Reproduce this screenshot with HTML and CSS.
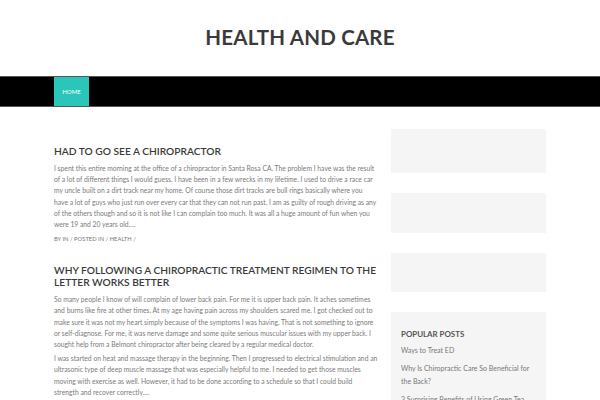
FILE: index.html
```html
<!DOCTYPE html>
<html>
<head>
<meta charset="utf-8">
<link rel="stylesheet" href="styles.css">
</head>
<body>
<header class="site-header">
  <h1 class="site-title">HEALTH AND CARE</h1>
</header>
<nav class="main-nav">
  <div class="nav-inner">
    <a class="nav-item active">HOME</a>
  </div>
</nav>
<div class="container">
  <main class="content">
    <article class="post">
      <h2 class="post-title">HAD TO GO SEE A CHIROPRACTOR</h2>
      <p class="post-text">I spent this entire morning at the office of a chiropractor in Santa Rosa CA. The problem I have was the result of a lot of different things I would guess. I have been in a few wrecks in my lifetime. I used to drive a race car my uncle built on a dirt track near my home. Of course those dirt tracks are bull rings basically where you have a lot of guys who just run over every car that they can not run past. I am as guilty of rough driving as any of the others though and so it is not like I can complain too much. It was all a huge amount of fun when you were 19 and 20 years old.…</p>
      <div class="post-meta">BY IN / POSTED IN / HEALTH /</div>
    </article>
    <article class="post">
      <h2 class="post-title">WHY FOLLOWING A CHIROPRACTIC TREATMENT REGIMEN TO THE LETTER WORKS BETTER</h2>
      <p class="post-text">So many people I know of will complain of lower back pain. For me it is upper back pain. It aches sometimes and burns like fire at other times. At my age having pain across my shoulders scared me. I got checked out to make sure it was not my heart simply because of the symptoms I was having. That is not something to ignore or self-diagnose. For me, it was nerve damage and some quite serious muscular issues with my upper back. I sought help from a Belmont chiropractor after being cleared by a regular medical doctor.</p>
      <p class="post-text">I was started on heat and massage therapy in the beginning. Then I progressed to electrical stimulation and an ultrasonic type of deep muscle massage that was especially helpful to me. I needed to get those muscles moving with exercise as well. However, it had to be done according to a schedule so that I could build strength and recover correctly.…</p>
    </article>
  </main>
  <aside class="sidebar">
    <div class="widget w1"></div>
    <div class="widget w2"></div>
    <div class="widget w3"></div>
    <div class="widget popular">
      <h3 class="widget-title">POPULAR POSTS</h3>
      <ul class="popular-list">
        <li>Ways to Treat ED</li>
        <li>Why Is Chiropractic Care So Beneficial for the Back?</li>
        <li>3 Surprising Benefits of Using Green Tea</li>
      </ul>
    </div>
  </aside>
</div>
</body>
</html>
```

FILE: styles.css
```css
* { box-sizing: border-box; }
html, body { margin: 0; padding: 0; background: #fff; }
body {
  font-family: Lato, "Open Sans", "Liberation Sans", sans-serif;
  color: #777;
  width: 600px;
  height: 400px;
  overflow: hidden;
}
.site-header {
  height: 76px;
  display: flex;
  align-items: center;
  justify-content: center;
  padding-bottom: 2px;
}
.site-title {
  margin: 0;
  font-size: 20.5px;
  font-weight: 700;
  color: #3a3a3a;
  letter-spacing: 0.2px;
}
.main-nav {
  background: #000;
  border-top: 1px solid #555;
  border-bottom: 1px solid #555;
  height: 31px;
}
.nav-inner {
  padding-left: 54px;
  display: flex;
  height: 100%;
}
.nav-item {
  background: #2ac6b9;
  color: #fff;
  font-size: 6px;
  width: 35px;
  display: flex;
  align-items: center;
  justify-content: center;
}
.container {
  display: flex;
  padding: 22px 54px 0 54px;
  gap: 13px;
}
.content {
  width: 324px;
  flex: none;
  padding-top: 16px;
}
.post { margin-bottom: 21px; }
.post-title {
  margin: 0 0 6px 0;
  font-size: 10.2px;
  line-height: 12px;
  font-weight: 600;
  color: #3a3a3a;
}
.post-text {
  margin: 0 0 3px 0;
  font-size: 6.75px;
  line-height: 11.2px;
  color: #7a7a7a;
}
.post-meta {
  margin-top: 5px;
  font-size: 5.8px;
  line-height: 8px;
  color: #777;
}
.sidebar {
  width: 155px;
  flex: none;
  display: flex;
  flex-direction: column;
  gap: 20px;
}
.widget { background: #f5f5f5; }
.w1 { height: 44px; }
.w2 { height: 40px; }
.w3 { height: 39px; }
.popular { padding: 17px 10px 10px 10px; }
.widget-title {
  margin: 0 0 5px 0;
  font-size: 7.9px;
  font-weight: 700;
  color: #555;
}
.popular-list {
  list-style: none;
  margin: 0;
  padding: 0;
  font-size: 7px;
  line-height: 13px;
  color: #777;
}
.popular-list li { margin-bottom: 5px; }
```
